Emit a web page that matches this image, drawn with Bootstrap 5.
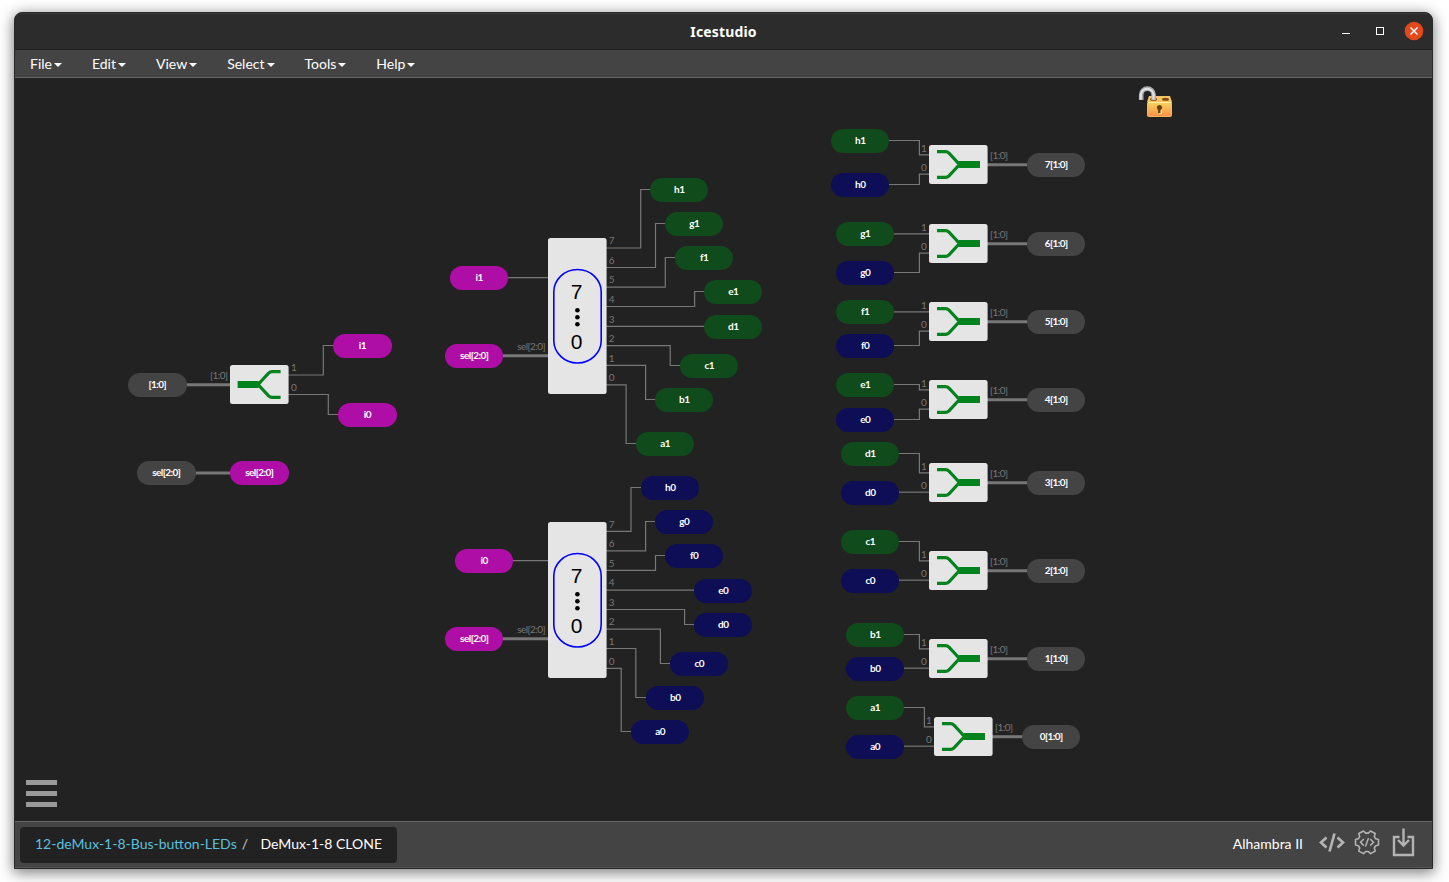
<!DOCTYPE html>
<html lang="en">
<head>
<meta charset="utf-8">
<title>Icestudio</title>
<link rel="stylesheet" href="https://cdn.jsdelivr.net/npm/bootstrap@5.3.0/dist/css/bootstrap.min.css">
<style>
  body { height: 882px; overflow: hidden; background: #fff; padding: 12px 16px 13px 14px; font-family: Lato, "Open Sans", sans-serif; font-size: 14px; line-height: 1.43; }
  .app-window { width: 1419px; height: 857px; background: #222; border: 1px solid #292929; border-radius: 8px 8px 0 0; box-shadow: 0 3px 14px 1px rgba(0,0,0,.5); overflow: hidden; }
  .title-bar { height: 37px; flex: none; background: #2c2c2c; border-top: 1px solid #3a3a3a; border-bottom: 1px solid #222; display: grid; grid-template-columns: 1fr auto 1fr; color: #fff; }
  .title-bar .app-name { font: bold 14px/20px "Noto Sans", sans-serif; letter-spacing: .15px; }
  .menu-bar { height: 28px; flex: none; background: #444; border-bottom: 1px solid #666; }
  .menu-bar .nav-link { color: #fff; padding: 0 15px; line-height: 27px; font-size: 14px; }
  .menu-bar .dropdown-toggle::after { margin-left: 2px; vertical-align: 2px; border-width: 4px 4px 0 4px; }
  .design { background: #222; }
  .design svg.wires { display: block; width: 1417px; height: 743px; }
  .pin { position: absolute; width: 58.45px; height: 24px; border-radius: 12px; color: #fff; font-size: 10px; font-weight: 700; line-height: 23px; text-align: center; letter-spacing: -.55px; }
  .pin-io { background: #444; } .pin-mag { background: #ae0ea5; } .pin-green { background: #104b1b; } .pin-blue { background: #0d0e56; }
  .port { font-size: 10px; letter-spacing: -.55px; fill: #777; }
  .num { font: 21px "Liberation Sans", sans-serif; }
  .lock { position: absolute; left: 1122px; top: 6px; }
  .burger { position: absolute; left: 11px; top: 702px; width: 31px; display: grid; gap: 6px; }
  .burger span { height: 5px; background: #999; }
  .foot-bar { height: 47px; flex: none; background: #444; border-top: 1px solid #666; border-bottom: 1px solid #555; color: #fff; padding: 5px 17px 4px 5px; }
  .foot-bar .crumbs { background: #222; border-radius: 4px; height: 36px; width: 377px; padding: 0 15px 2px; white-space: nowrap; }
  .crumbs .parent-link { color: #5bc0de; text-decoration: none; }
  .crumbs .divider { color: #ccc; margin-left: 5px; }
  .foot-bar .board { padding-bottom: 1px; }
  .foot-bar .tools { margin-left: 16px; }
</style>
</head>
<body>
<div class="app-window d-flex flex-column">
  <header class="title-bar align-items-center">
    <span></span>
    <span class="app-name">Icestudio</span>
    <svg class="ms-auto" width="90" height="35" viewBox="1342 14 90 35" fill="none">
      <path d="M1342 33.500h8" stroke="#fff"/>
      <rect x="1376.500" y="27.500" width="7" height="7" stroke="#fff"/>
      <circle cx="1414" cy="31" r="9.300" fill="#e2491b"/>
      <path d="M1410.500 27.500l7 7m0-7l-7 7" stroke="#fff" stroke-width="1.500"/>
    </svg>
  </header>
  <nav class="menu-bar nav flex-nowrap">
    <a class="nav-link dropdown-toggle">File</a>
    <a class="nav-link dropdown-toggle">Edit</a>
    <a class="nav-link dropdown-toggle">View</a>
    <a class="nav-link dropdown-toggle">Select</a>
    <a class="nav-link dropdown-toggle">Tools</a>
    <a class="nav-link dropdown-toggle">Help</a>
  </nav>
  <main class="design position-relative flex-grow-1" id="design">
    <svg class="wires" id="wires" viewBox="15 78 1417 743">
      <defs>
        <g id="merge">
          <rect width="58.600" height="39" rx="2.500" fill="#e5e5e5"/>
          <path d="M8 6.700h8.500q2 0 3.500 1.500l7.500 8q2.500 3.300 5 3.300q-2.500 0-5 3.300l-7.500 8q-1.500 1.500-3.500 1.500H8" fill="none" stroke="#04821e" stroke-width="3.200"/>
          <path d="M30 19.500h21" stroke="#04821e" stroke-width="7"/>
        </g>
        <g id="demux">
          <rect width="58.600" height="156" rx="2.500" fill="#e5e5e5"/>
          <rect x="5.800" y="31.500" width="47.400" height="93.500" rx="23.700" ry="22.500" fill="none" stroke="#00f" stroke-width="1.600"/>
          <circle cx="29.400" cy="72.300" r="2.300"/><circle cx="29.400" cy="79.300" r="2.300"/><circle cx="29.400" cy="86.300" r="2.300"/>
        </g>
      </defs>
    </svg>
    <svg class="lock" width="38" height="36" viewBox="1137 84 38 36">
      <defs>
        <linearGradient id="gold" x1="0" y1="0" x2="0" y2="1"><stop offset="0" stop-color="#f3d55c"/><stop offset="1" stop-color="#ff9148"/></linearGradient>
      </defs>
      <path d="M1149 96h21l2 6h-25z" fill="#f7c463"/>
      <ellipse cx="1153.500" cy="99.300" rx="3.500" ry="1.500" fill="#7d4c12"/><ellipse cx="1165.500" cy="99.300" rx="3.500" ry="1.500" fill="#7d4c12"/>
      <path d="M1141.200 100v-5.200a6.200 6.200 0 0 1 12.400 0V100" fill="none" stroke="#a9abad" stroke-width="4.600"/>
      <path d="M1140.800 99.500v-5a6.400 6.400 0 0 1 12.700 0v5" fill="none" stroke="#dfe1e3" stroke-width="2.200"/>
      <rect x="1147.500" y="102.300" width="24" height="14.200" rx="1" fill="url(#gold)" stroke="#fbb45b"/>
      <path d="M1148 102.500h23.500" stroke="#fff0a8"/>
      <path d="M1160.700 106.500v7.500" stroke="#ffe9a0" stroke-width="2.600"/>
      <circle cx="1159.500" cy="107.500" r="2.600" fill="#6d3f10"/><path d="M1159.300 107v6" stroke="#6d3f10" stroke-width="2.400"/>
    </svg>
    <div class="burger"><span></span><span></span><span></span></div>
  </main>
  <footer class="foot-bar d-flex align-items-center">
    <div class="crumbs d-flex align-items-center"><a class="parent-link">12-deMux-1-8-Bus-button-LEDs</a><span class="divider">/</span><span class="ms-auto">DeMux-1-8 CLONE</span></div>
    <span class="ms-auto board">Alhambra II</span>
    <svg class="tools" width="96" height="36" viewBox="1319 827 96 36" fill="none" stroke="#b3b3b3">
      <path d="M1326.500 837.500l-5.500 5 5.500 5M1337.500 837.500l5.500 5-5.500 5M1334.500 833.500l-5 18" stroke-width="2.700"/>
      <path transform="translate(1367 842.300)" d="M11.500-2.700V2.700L8.700 3.500 7.300 5.700 8.200 8.800 3.500 11.300 1.300 9.200H-1.300L-3.500 11.300-8.200 8.800-7.300 5.700-8.700 3.500-11.500 2.700V-2.700L-8.700-3.500-7.300-5.700-8.200-8.800-3.500-11.300-1.300-9.200H1.300L3.500-11.300 8.200-8.800 7.300-5.700 8.700-3.500z" stroke-width="1.600" stroke-linejoin="round"/>
      <path d="M1363.800 839l-3.300 3.300 3.300 3.300M1370.200 839l3.300 3.300-3.300 3.300M1368.500 838l-3 8.500" stroke-width="1.500"/>
      <path d="M1399.500 837h-5.500v18h19v-18h-5.500M1403.500 828.500v16M1398 840l5.500 5.500 5.500-5.500" stroke-width="2.400"/>
    </svg>
  </footer>
</div>
<script>
  const origin = { x: 15, y: 78 };
  const design = document.getElementById('design');
  const wires = document.getElementById('wires');
  const wireColor = '#777';
  let art = '';

  function pin(kind, text, x, y) {
    const el = document.createElement('div');
    el.className = 'pin pin-' + kind;
    el.textContent = text;
    el.style.left = (x - origin.x) + 'px';
    el.style.top = (y - origin.y) + 'px';
    design.appendChild(el);
  }
  function wire(d, w = 1.2) { art += `<path d="${d}" fill="none" stroke="${wireColor}" stroke-width="${w}"/>`; }
  function port(text, x, y, anchor = 'start') { art += `<text class="port" x="${x}" y="${y}" text-anchor="${anchor}">${text}</text>`; }

  // Input bus splitter
  pin('io', '[1:0]', 128.1, 373);
  pin('mag', 'i1', 333.1, 334);
  pin('mag', 'i0', 338.1, 403);
  pin('io', 'sel[2:0]', 137.1, 461);
  pin('mag', 'sel[2:0]', 230.1, 461);
  wire('M186 384.800H231', 3);
  wire('M195 473H231', 3);
  wire('M288 375H323.300V345.500H334');
  wire('M288 394.500H328.300V414.500H339');
  port('[1:0]', 227.500, 379.300, 'end');
  port(1, 291, 371);
  port(0, 291, 391);
  art += '<use href="#merge" transform="translate(288.600 365) scale(-1 1)"/>';

  // Demultiplexers: rows are [name, pin x, pin y, port y, elbow x]
  const demuxes = [
    { top: 238, kind: 'green', input: ['i1', 450, 266], sel: 344, outs: [
      ['h1', 650, 178, 248, 640.7], ['g1', 665, 212, 267.5, 655.5], ['f1', 675, 246, 287.2, 665.3], ['e1', 704, 280, 306.5, 694.6],
      ['d1', 704, 315, 326.4, 694], ['c1', 680, 354, 345.6, 670.2], ['b1', 655, 388, 365.4, 645.6], ['a1', 636, 432, 384.8, 626.1]] },
    { top: 522, kind: 'blue', input: ['i0', 455, 549], sel: 627, outs: [
      ['h0', 641, 476, 531.4, 631], ['g0', 655, 510, 550.8, 645.6], ['f0', 665, 544, 570.4, 655.5], ['e0', 694, 579, 590.1, 684],
      ['d0', 694, 613, 609.5, 684.6], ['c0', 670, 652, 629.2, 660.4], ['b0', 646, 686, 648.5, 635.8], ['a0', 631, 720, 668.4, 621.2]] }
  ];
  for (const m of demuxes) {
    const [name, x, y] = m.input;
    pin('mag', name, x, y);
    pin('mag', 'sel[2:0]', 445, m.sel);
    wire(`M${x + 58} ${y + 11.6}H549`);
    wire(`M503 ${m.sel + 11.8}H549`, 3);
    port('sel[2:0]', 545, m.sel + 6, 'end');
    m.outs.forEach(([n, px, py, wy, ex], i) => {
      pin(m.kind, n, px, py);
      const end = Math.abs(py + 11.5 - wy) < 1 ? wy : py + 11.5;
      wire(`M606 ${wy}H${ex}V${end}H${px + 1}`);
      port(7 - i, 608.8, wy - 3.8);
    });
    art += `<use href="#demux" x="548" y="${m.top}"/>`;
    art += `<text class="num" x="576.600" y="${m.top + 61}" text-anchor="middle">7</text>`;
    art += `<text class="num" x="576.600" y="${m.top + 111}" text-anchor="middle">0</text>`;
  }

  // Output mergers: [letter, pin x, green y, blue y, block x, block y, output x, output label]
  [['h', 831, 129, 173, 929, 145, 1027, 7], ['g', 836, 222, 261, 929, 224, 1027, 6], ['f', 836, 300, 334, 929, 302, 1027, 5],
   ['e', 836, 373, 408, 929, 380, 1027, 4], ['d', 841, 442, 481, 929, 463, 1027, 3], ['c', 841, 530, 569, 929, 551, 1027, 2],
   ['b', 846, 623, 657, 929, 639, 1027, 1], ['a', 846, 696, 735, 934, 717, 1022, 0]
  ].forEach(([c, x, y1, y0, bx, by, ox, n]) => {
    pin('green', c + 1, x, y1);
    pin('blue', c + 0, x, y0);
    pin('io', n + '[1:0]', ox, by + 8);
    [[y1, by + 9.8], [y0, by + 29.2]].forEach(([py, wy], i) => {
      const start = Math.abs(py + 11.5 - wy) < 1.2 ? wy : py + 11.5;
      wire(`M${x + 58} ${start}H${bx - 9.6}V${wy}H${bx + 1}`);
      port(1 - i, bx - 2.8, wy - 3.3, 'end');
    });
    wire(`M${bx + 58} ${by + 19.7}H${ox + 1}`, 3);
    port('[1:0]', bx + 61, by + 14);
    art += `<use href="#merge" x="${bx}" y="${by}"/>`;
  });
  wires.insertAdjacentHTML('beforeend', art);
</script>
<script src="https://cdn.jsdelivr.net/npm/bootstrap@5.3.0/dist/js/bootstrap.bundle.min.js"></script>
</body>
</html>
